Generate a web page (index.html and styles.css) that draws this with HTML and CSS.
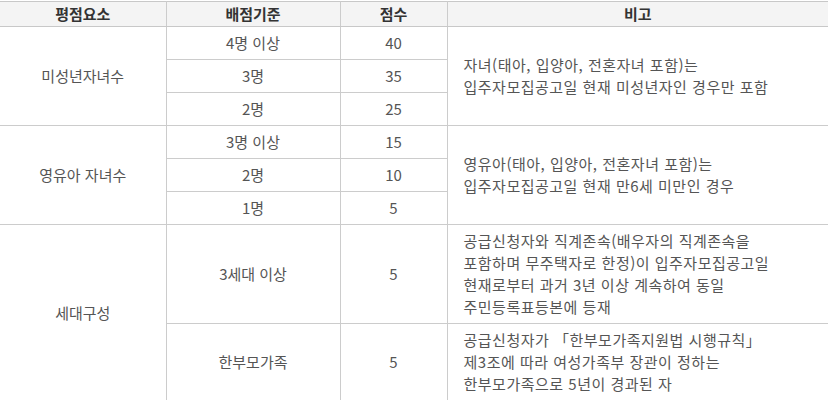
FILE: index.html
```html
<!DOCTYPE html>
<html lang="ko">
<head>
<meta charset="utf-8">
<link rel="stylesheet" href="styles.css">
</head>
<body>
<table class="score">
  <colgroup>
    <col class="c1"><col class="c2"><col class="c3"><col class="c4">
  </colgroup>
  <thead>
    <tr><th>평점요소</th><th>배점기준</th><th>점수</th><th>비고</th></tr>
  </thead>
  <tbody>
    <tr>
      <td rowspan="3">미성년자녀수</td>
      <td>4명 이상</td><td>40</td>
      <td rowspan="3" class="note">자녀(태아, 입양아, 전혼자녀 포함)는<br>입주자모집공고일 현재 미성년자인 경우만 포함</td>
    </tr>
    <tr><td>3명</td><td>35</td></tr>
    <tr><td>2명</td><td>25</td></tr>
    <tr>
      <td rowspan="3">영유아 자녀수</td>
      <td>3명 이상</td><td>15</td>
      <td rowspan="3" class="note">영유아(태아, 입양아, 전혼자녀 포함)는<br>입주자모집공고일 현재 만6세 미만인 경우</td>
    </tr>
    <tr><td>2명</td><td>10</td></tr>
    <tr><td>1명</td><td>5</td></tr>
    <tr>
      <td rowspan="2">세대구성</td>
      <td>3세대 이상</td><td>5</td>
      <td class="note">공급신청자와 직계존속(배우자의 직계존속을<br>포함하며 무주택자로 한정)이 입주자모집공고일<br>현재로부터 과거 3년 이상 계속하여 동일<br>주민등록표등본에 등재</td>
    </tr>
    <tr>
      <td>한부모가족</td><td>5</td>
      <td class="note">공급신청자가 「한부모가족지원법 시행규칙」<br>제3조에 따라 여성가족부 장관이 정하는<br>한부모가족으로 5년이 경과된 자</td>
    </tr>
  </tbody>
</table>
</body>
</html>
```
FILE: styles.css
```css
html, body {
  margin: 0;
  padding: 0;
  background: #fff;
}
body {
  padding-top: 1px;
  font-family: "Noto Sans CJK KR", "Noto Sans", sans-serif;
  font-size: 15px;
  color: #555;
}
.score {
  width: 828px;
  border-collapse: collapse;
  table-layout: fixed;
  border-top: 1px solid #c8c8c8;
}
.c1 { width: 166px; }
.c2 { width: 174px; }
.c3 { width: 107px; }
.c4 { width: 381px; }
.score th,
.score td {
  border: 1px solid #cccccc;
  text-align: center;
  vertical-align: middle;
  line-height: 22px;
  padding: 5px 0;
}
.score th:first-child,
.score tr:first-child td[rowspan] {
  border-left: none;
}
.score tbody td[rowspan]:first-child {
  border-left: none;
}
.score th:last-child,
.score td.note {
  border-right: none;
}
.score th {
  background: #f4f4f4;
  color: #333;
  font-weight: bold;
  height: 24px;
  padding: 0;
  border-top: 1px solid #c8c8c8;
  border-bottom: 1px solid #c8c8c8;
}
.score td.note {
  text-align: left;
  padding: 5px 16px;
  letter-spacing: 0.5px;
}
```
